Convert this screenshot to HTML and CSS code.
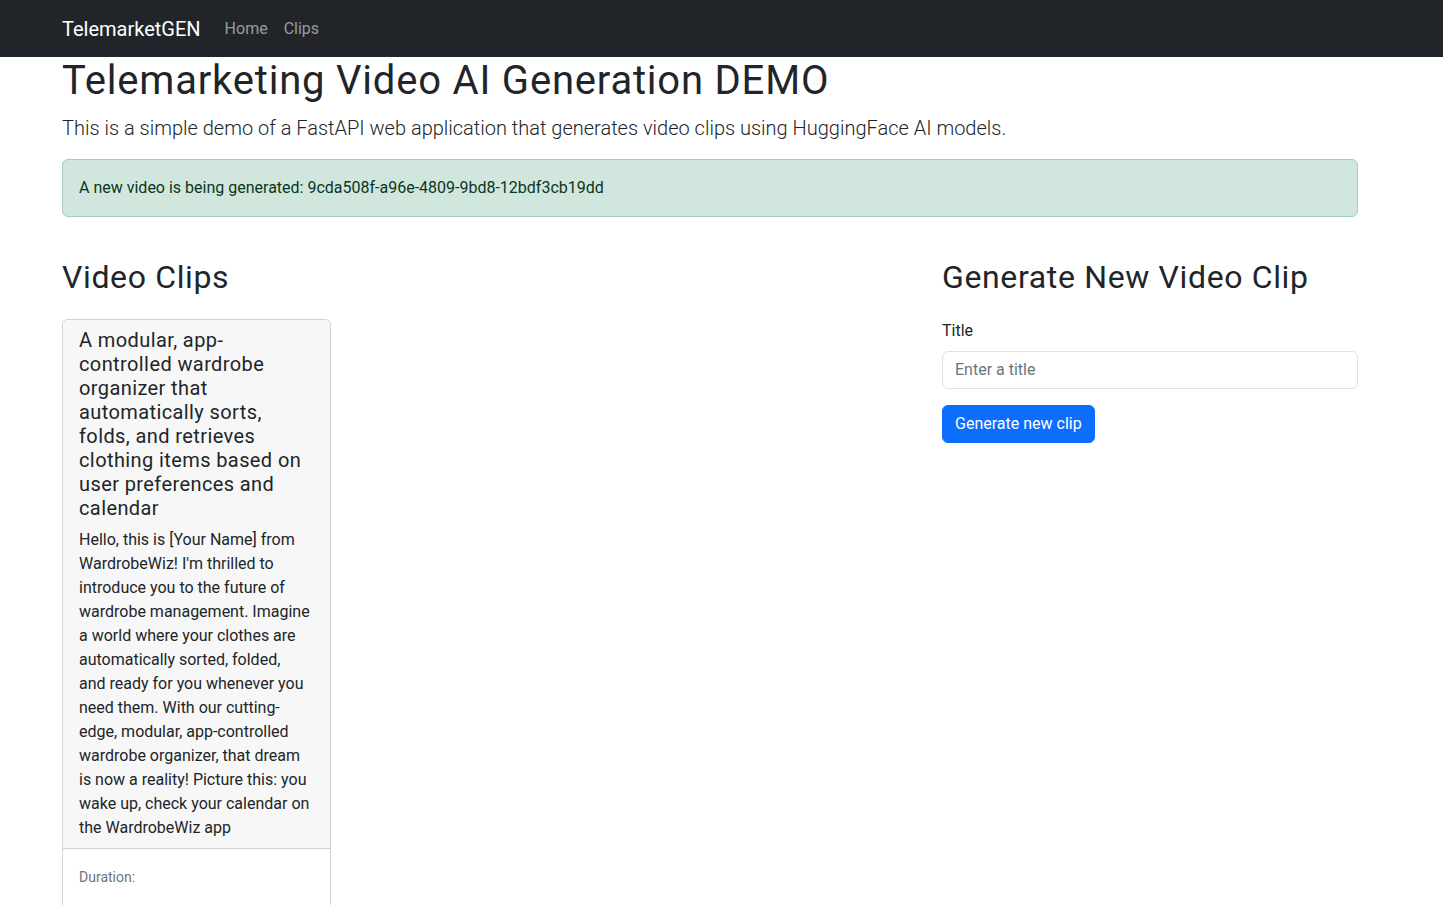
FILE: index.html
```html
<!DOCTYPE html>
<html lang="en">
<head>
<meta charset="utf-8">
<title>TelemarketGEN</title>
<link rel="stylesheet" href="styles.css">
</head>
<body>
<nav class="navbar">
  <div class="container nav-inner">
    <a class="brand" href="#">TelemarketGEN</a>
    <ul class="nav-links">
      <li><a class="nav-link" href="#">Home</a></li>
      <li><a class="nav-link" href="#">Clips</a></li>
    </ul>
  </div>
</nav>
<main class="container">
  <h1 class="title">Telemarketing Video AI Generation DEMO</h1>
  <p class="lead">This is a simple demo of a FastAPI web application that generates video clips using HuggingFace AI models.</p>
  <div class="alert">A new video is being generated: 9cda508f-a96e-4809-9bd8-12bdf3cb19dd</div>
  <div class="row">
    <section class="col-main">
      <h2 class="section-title">Video Clips</h2>
      <div class="cards">
        <div class="card">
          <div class="card-body">
            <h5 class="card-title">A modular, app-<br>controlled wardrobe<br>organizer that<br>automatically sorts,<br>folds, and retrieves<br>clothing items based on<br>user preferences and<br>calendar</h5>
            <p class="card-text">Hello, this is [Your Name] from<br>WardrobeWiz! I'm thrilled to<br>introduce you to the future of<br>wardrobe management. Imagine<br>a world where your clothes are<br>automatically sorted, folded,<br>and ready for you whenever you<br>need them. With our cutting-<br>edge, modular, app-controlled<br>wardrobe organizer, that dream<br>is now a reality! Picture this: you<br>wake up, check your calendar on<br>the WardrobeWiz app</p>
          </div>
          <div class="card-footer">
            <p class="meta"><small>Duration:</small></p>
          </div>
        </div>
      </div>
    </section>
    <section class="col-side">
      <h2 class="section-title">Generate New Video Clip</h2>
      <form class="gen-form">
        <div class="field">
          <label class="label" for="title">Title</label>
          <input class="input" id="title" type="text" placeholder="Enter a title">
        </div>
        <button class="btn" type="button">Generate new clip</button>
      </form>
    </section>
  </div>
</main>
</body>
</html>
```

FILE: styles.css
```css
* { box-sizing: border-box; }
html, body { margin: 0; padding: 0; }
body {
  font-family: Roboto, "Liberation Sans", sans-serif;
  font-size: 16px;
  line-height: 1.5;
  color: #212529;
  background: #fff;
}
.container {
  width: 1320px;
  margin-left: 50px;
  padding: 0 12px;
}
.navbar {
  background: #212529;
  height: 57px;
  display: flex;
  align-items: center;
}
.nav-inner {
  display: flex;
  align-items: center;
}
.brand {
  color: #fff;
  text-decoration: none;
  font-size: 20px;
  line-height: 30px;
  margin-right: 16px;
  padding: 5px 0;
}
.nav-links {
  display: flex;
  list-style: none;
  margin: 0;
  padding: 0;
}
.nav-link {
  display: block;
  padding: 8px 8px;
  color: rgba(255,255,255,.55);
  text-decoration: none;
  font-size: 16px;
}
.title {
  font-size: 40px;
  font-weight: 400;
  letter-spacing: 0.02em;
  line-height: 1.2;
  margin: 0 0 8px;
}
.lead {
  font-size: 20px;
  font-weight: 300;
  line-height: 30px;
  margin: 0 0 16px;
}
.alert {
  background: #d1e7dd;
  border: 1px solid #a3cfbb;
  color: #0a3622;
  border-radius: 6px;
  padding: 16px;
  margin-bottom: 16px;
}
.row {
  display: flex;
  margin: 41px -12px 0;
}
.col-main { flex: 0 0 66.6667%; padding: 0 12px; }
.col-side { flex: 0 0 33.3333%; padding: 0 12px; }
.section-title {
  font-size: 32px;
  font-weight: 400;
  letter-spacing: 0.02em;
  line-height: 1.2;
  margin: 0;
}
.cards {
  display: grid;
  grid-template-columns: repeat(3, 1fr);
  gap: 24px;
  margin-top: 23px;
}
.card {
  border: 1px solid rgba(0,0,0,.175);
  border-radius: 6px;
  overflow: hidden;
  background: #fff;
}
.card-body {
  background: #f7f7f7;
  padding: 8px 16px;
}
.card-title {
  font-size: 20px;
  font-weight: 400;
  letter-spacing: 0.02em;
  line-height: 1.2;
  margin: 0 0 8px;
}
.card-text { margin: 0; }
.card-footer {
  border-top: 1px solid rgba(0,0,0,.175);
  padding: 16px;
  background: #fff;
}
.meta { margin: 0 0 16px; color: #6c757d; }
.meta small { font-size: 14px; }
.gen-form { margin-top: 23px; }
.field { margin-bottom: 16px; }
.label {
  display: block;
  margin-bottom: 8px;
}
.input {
  display: block;
  width: 100%;
  font: inherit;
  color: #212529;
  padding: 6px 12px;
  line-height: 24px;
  border: 1px solid #dee2e6;
  border-radius: 6px;
  background: #fff;
}
.input::placeholder { color: #6c757d; }
.btn {
  font: inherit;
  line-height: 24px;
  padding: 6px 12px;
  color: #fff;
  background: #0d6efd;
  border: 1px solid #0d6efd;
  border-radius: 6px;
  cursor: pointer;
}
```
